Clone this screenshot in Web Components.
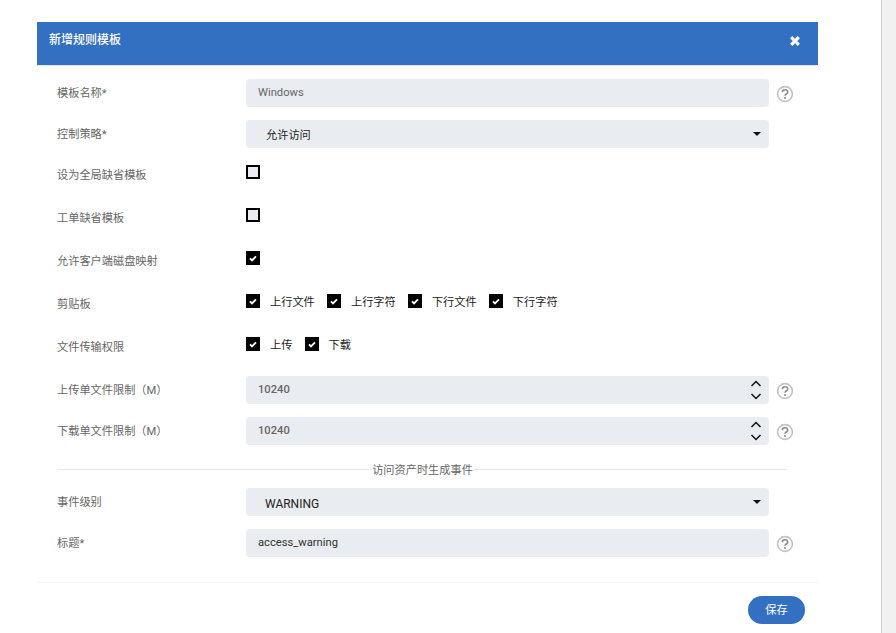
<!DOCTYPE html>
<html lang="zh-CN">
<head>
<meta charset="utf-8">
<title>新增规则模板</title>
<style>
html,body{margin:0;padding:0;height:633px;overflow:hidden;background:#fff;font-family:Roboto,"Liberation Sans","Noto Sans CJK SC",sans-serif;font-size:11.2px;}
</style>
</head>
<body>
<page-shell>
  <rule-modal heading="新增规则模板">
    <form-row label="模板名称*" help><text-field>Windows</text-field></form-row>
    <form-row label="控制策略*"><select-field>允许访问</select-field></form-row>
    <form-row label="设为全局缺省模板" tall><check-item></check-item></form-row>
    <form-row label="工单缺省模板" tall><check-item></check-item></form-row>
    <form-row label="允许客户端磁盘映射" tall><check-item checked></check-item></form-row>
    <form-row label="剪贴板" tall><check-item checked>上行文件</check-item><check-item checked>上行字符</check-item><check-item checked>下行文件</check-item><check-item checked>下行字符</check-item></form-row>
    <form-row label="文件传输权限" tall><check-item checked>上传</check-item><check-item checked>下载</check-item></form-row>
    <form-row label="上传单文件限制（M）" help><number-field>10240</number-field></form-row>
    <form-row label="下载单文件限制（M）" help><number-field>10240</number-field></form-row>
    <form-divider>访问资产时生成事件</form-divider>
    <form-row label="事件级别"><select-field latin>WARNING</select-field></form-row>
    <form-row label="标题*" help><text-field dark>access_warning</text-field></form-row>
  </rule-modal>
</page-shell>
<script>
function define(name, css, html){
  customElements.define(name, class extends HTMLElement{
    connectedCallback(){
      if(this.shadowRoot) return;
      const r=this.attachShadow({mode:'open'});
      r.innerHTML='<style>'+css+'</style>'+(typeof html==='function'?html(this):html);
    }
  });
}
define('page-shell',
 ':host{display:flex;width:896px;height:633px}.main{flex:1;min-width:0}.bar{width:14px;background:#f1f1f1;border-left:1px solid #d0d0d0}',
 '<div class="main"><slot></slot></div><div class="bar"></div>');
define('rule-modal',
 `:host{display:block;width:781px;margin:22px 0 0 37px;background:#fff}
  header{height:43px;background:#3370c2;border-bottom:1px solid #e6e9ee;display:flex;justify-content:space-between;color:#fff;padding:0 17px 0 12px}
  h1{margin:0;font-size:12px;font-weight:500;line-height:36px}
  svg{margin-top:13px}
  .body{padding:13px 0 12px 20px}
  footer{border-top:1px solid #f2f3f5;padding:13px 13px 0 0;display:flex;justify-content:flex-end}
  button{width:57px;height:28px;border:0;border-radius:14px;background:#3370c2;color:#fff;font:inherit;font-size:11.2px;padding:0 0 2px}`,
 el=>`<header><h1>${el.getAttribute('heading')}</h1><svg width="12" height="12" viewBox="0 0 12 12"><path d="M2.2 2.2l7.6 7.6M9.8 2.2l-7.6 7.6" stroke="#fff" stroke-width="3.2"/></svg></header>
  <div class="body"><slot></slot></div><footer><button>保存</button></footer>`);
define('form-row',
 `:host{display:grid;grid-template-columns:189px 523px 1fr;min-height:28px;margin-bottom:13px;color:#666}
  :host([tall]){min-height:30px}
  .l{padding-top:2px;line-height:26px;color:#666}
  .c{display:flex;align-items:flex-start;min-width:0}
  .h{padding:6px 0 0 7px;height:18px}
  svg{display:block}`,
 el=>`<div class="l">${el.getAttribute('label')}</div><div class="c"><slot></slot></div><div class="h">${el.hasAttribute('help')?'<svg width="18" height="18" viewBox="0 0 18 18" fill="none"><circle cx="9" cy="9" r="7.4" stroke="#c2c2c2" stroke-width="1.6"/><path d="M6.3 7.1C6.4 5.6 7.5 4.8 9 4.8c1.5 0 2.7.9 2.7 2.2 0 2-2.7 2-2.7 3.8" stroke="#8c8c8c" stroke-width="1.6"/><circle cx="9" cy="13" r="1" fill="#8c8c8c"/></svg>':''}</div>`);
const box=':host{display:flex;align-items:center;width:100%;height:28px;box-sizing:border-box;background:#e9ecf0;border-radius:4px;position:relative}';
define('text-field', box+':host{padding:0 0 2px 12px;color:#666}:host([dark]){color:#333}', '<slot></slot>');
define('select-field', box+':host{padding-left:20px;color:#222}:host([latin]){font-size:12px;padding:3px 0 0 19px}.a{position:absolute;right:8px;top:12px;width:0;height:0;border:4px solid transparent;border-top:4px solid #111;border-bottom:0}', '<slot></slot><span class="a"></span>');
define('number-field', box+':host{padding:0 0 2px 12px;color:#666;font-weight:500}svg{position:absolute;right:6px;top:3px}',
 '<slot></slot><svg width="14" height="22" viewBox="0 0 14 22" fill="none" stroke="#111" stroke-width="1.5"><path d="M2.5 7l4.5-4.5L11.5 7M2.5 15l4.5 4.5 4.5-4.5"/></svg>');
define('check-item',
 `:host{display:inline-flex;align-items:center;height:14px;margin-top:4px;margin-right:12.2px;color:#222}
  .b{width:14px;height:14px;box-sizing:border-box;border:2px solid #000;background:#e9ecf0;display:block}
  :host([checked]) .b{background:#000}
  svg{display:none}:host([checked]) svg{display:block}
  .t{margin-left:10px}`,
 el=>`<span class="b"><svg width="10" height="10" viewBox="0 0 10 10" fill="none"><path d="M2 5.3l2 2 4-4" stroke="#fff" stroke-width="1.9"/></svg></span>${el.textContent?'<span class="t"><slot></slot></span>':''}`);
define('form-divider',
 `:host{display:flex;align-items:center;width:729px;margin-left:1px;height:22px;margin-bottom:8px;color:#666}
  i{flex:1;height:1px;background:#e8e8e8}`,
 '<i></i><span><slot></slot></span><i></i>');
</script>
</body>
</html>
